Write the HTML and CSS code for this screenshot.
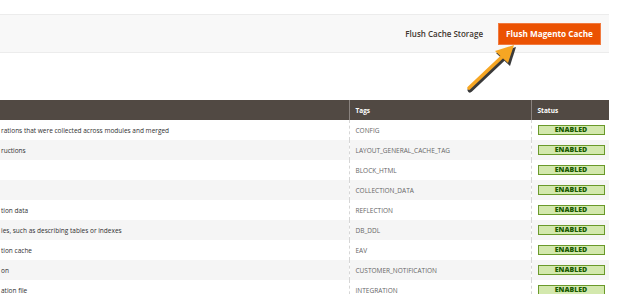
FILE: index.html
```html
<!DOCTYPE html>
<html lang="en">
<head>
  <meta charset="UTF-8">
  <title>Cache Management</title>
  <link rel="stylesheet" href="styles.css">
</head>
<body>
  <div class="page-actions">
    <button type="button" class="action-secondary">Flush Cache Storage</button>
    <button type="button" class="action-primary">Flush Magento Cache</button>
  </div>

  <svg class="pointer" width="60" height="56" viewBox="0 0 60 56">
    <line x1="8" y1="48" x2="44" y2="14" stroke="#3a3a3a" stroke-width="5" stroke-linecap="round"/>
    <polygon points="54,5 34,11 48,24" fill="#3a3a3a"/>
    <line x1="7" y1="46" x2="42" y2="13" stroke="#f6a623" stroke-width="3.6" stroke-linecap="round"/>
    <polygon points="52,3 33,9 46,21" fill="#f6a623"/>
  </svg>

  <table class="data-grid">
    <thead>
      <tr>
        <th class="col-desc"></th>
        <th class="col-tags">Tags</th>
        <th class="col-status">Status</th>
      </tr>
    </thead>
    <tbody>
      <tr>
        <td>rations that were collected across modules and merged</td>
        <td class="tags">CONFIG</td>
        <td><span class="grid-severity-notice">ENABLED</span></td>
      </tr>
      <tr>
        <td>ructions</td>
        <td class="tags">LAYOUT_GENERAL_CACHE_TAG</td>
        <td><span class="grid-severity-notice">ENABLED</span></td>
      </tr>
      <tr>
        <td></td>
        <td class="tags">BLOCK_HTML</td>
        <td><span class="grid-severity-notice">ENABLED</span></td>
      </tr>
      <tr>
        <td></td>
        <td class="tags">COLLECTION_DATA</td>
        <td><span class="grid-severity-notice">ENABLED</span></td>
      </tr>
      <tr>
        <td>tion data</td>
        <td class="tags">REFLECTION</td>
        <td><span class="grid-severity-notice">ENABLED</span></td>
      </tr>
      <tr>
        <td>ies, such as describing tables or indexes</td>
        <td class="tags">DB_DDL</td>
        <td><span class="grid-severity-notice">ENABLED</span></td>
      </tr>
      <tr>
        <td>tion cache</td>
        <td class="tags">EAV</td>
        <td><span class="grid-severity-notice">ENABLED</span></td>
      </tr>
      <tr>
        <td>on</td>
        <td class="tags">CUSTOMER_NOTIFICATION</td>
        <td><span class="grid-severity-notice">ENABLED</span></td>
      </tr>
      <tr>
        <td>ation file</td>
        <td class="tags">INTEGRATION</td>
        <td><span class="grid-severity-notice">ENABLED</span></td>
      </tr>
    </tbody>
  </table>
</body>
</html>
```

FILE: styles.css
```css
* {
  box-sizing: border-box;
}

body {
  margin: 0;
  background-color: #ffffff;
  color: #303030;
  font-family: "Open Sans", "Liberation Sans", sans-serif;
  overflow: hidden;
}

.page-actions {
  display: flex;
  align-items: center;
  justify-content: flex-end;
  gap: 9px;
  width: 609px;
  height: 39px;
  margin-top: 14px;
  padding-right: 8px;
  background-color: #f8f8f8;
  border-top: 1px solid #ececec;
  border-bottom: 1px solid #ececec;
}

button {
  font-family: inherit;
  font-size: 8px;
  font-weight: 600;
  cursor: pointer;
}

.action-secondary {
  padding: 0 6px;
  background: none;
  border: none;
  color: #41362f;
}

.action-primary {
  width: 103px;
  height: 22px;
  padding: 0;
  background-color: #eb5202;
  border: 1px solid #f17a3f;
  color: #ffffff;
  font-size: 8.2px;
  font-weight: 700;
}

.pointer {
  position: absolute;
  left: 462px;
  top: 42px;
}

.data-grid {
  width: 609px;
  margin-top: 47px;
  border-collapse: collapse;
  table-layout: fixed;
  font-size: 6.5px;
}

.data-grid th {
  height: 20px;
  padding: 0 6px;
  background-color: #514943;
  color: #ffffff;
  font-weight: 700;
  text-align: left;
  border-left: 1px solid #8a837f;
}

.data-grid th:first-child {
  border-left: none;
}

.col-desc {
  width: 349px;
}

.col-tags {
  width: 182px;
}

.data-grid td {
  height: 20px;
  padding: 0 6px;
  border-left: 1px dashed #d6d6d6;
  white-space: nowrap;
  overflow: hidden;
}

.data-grid td:first-child {
  padding-left: 1px;
  border-left: none;
}

.data-grid tbody tr:nth-child(even) {
  background-color: #f5f5f5;
}

.data-grid td.tags {
  color: #666666;
}

.grid-severity-notice {
  display: block;
  width: 67px;
  height: 10px;
  background-color: #d3e8ad;
  border: 1px solid #6a9a2a;
  color: #185b00;
  font-size: 7px;
  font-weight: 800;
  line-height: 8px;
  text-align: center;
}
```
